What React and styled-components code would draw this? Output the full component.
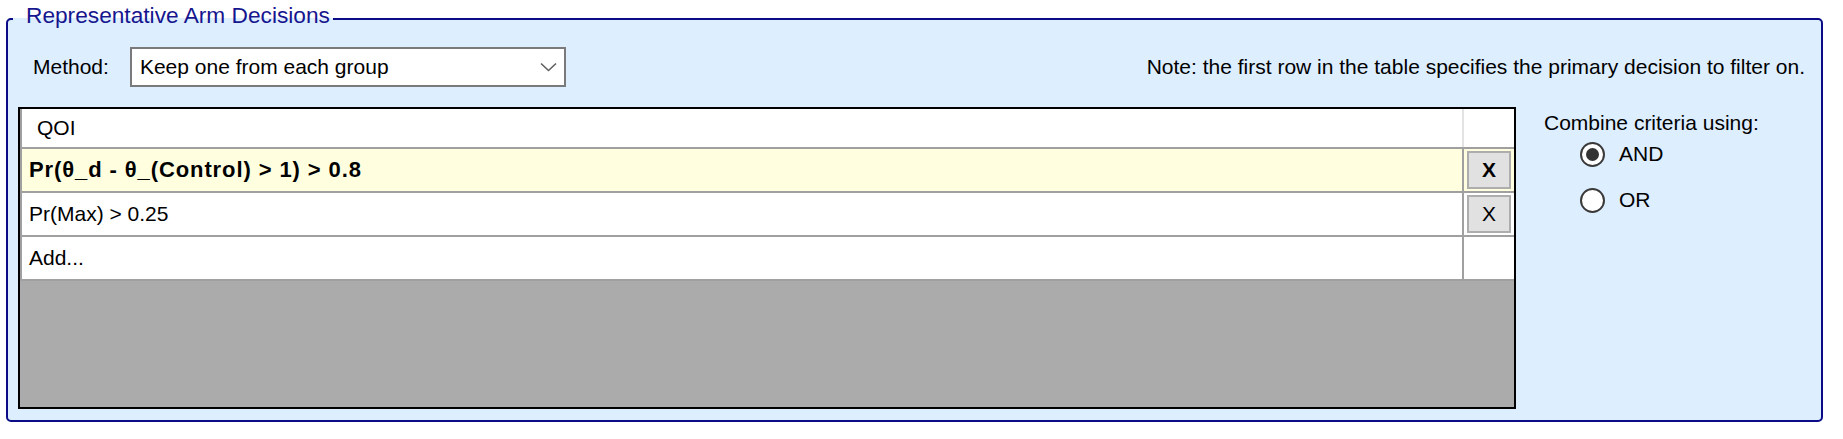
import React from "react";
import styled, { createGlobalStyle } from "styled-components";

const GlobalStyle = createGlobalStyle`
  html, body {
    margin: 0;
    padding: 0;
    background: #ffffff;
  }
  body {
    font-family: "Liberation Sans", Arial, sans-serif;
    font-size: 21px;
    color: #000000;
  }
`;

const Page = styled.div`
  width: 1843px;
  height: 439px;
  box-sizing: border-box;
  padding: 3px 20px 0 6px;
`;

const Group = styled.fieldset`
  margin: 0;
  min-width: 0;
  padding: 12px 14px 11px 10px;
  border: 2px solid #0b0b85;
  border-radius: 5px;
  background: #ddeeff;
`;

const Legend = styled.legend`
  margin-left: -5px;
  padding: 0 3px 7px 13px;
  line-height: 25px;
  font-size: 22.7px;
  color: #16168f;
`;

const TopRow = styled.div`
  display: flex;
  align-items: center;
  height: 40px;
  margin-bottom: 20px;
`;

const Label = styled.span`
  margin-left: 15px;
  margin-right: 21px;
  line-height: 24px;
`;

const Combo = styled.div`
  width: 436px;
  height: 40px;
  box-sizing: border-box;
  border: 2px solid #7a7a7a;
  background: #ffffff;
  display: flex;
  align-items: center;
  padding: 0 7px 0 8px;
`;

const ComboText = styled.span`
  flex: 1;
  line-height: 24px;
`;

const Note = styled.span`
  margin-left: auto;
  margin-right: 2px;
  line-height: 24px;
`;

const Body = styled.div`
  display: flex;
  gap: 28px;
`;

const Grid = styled.div`
  width: 1498px;
  height: 302px;
  box-sizing: border-box;
  border: 2px solid #000000;
  background: #ababab;
  display: flex;
  flex-direction: column;
`;

const HeaderRow = styled.div`
  display: flex;
  height: 40px;
  box-sizing: border-box;
  background: #ffffff;
  border-left: 2px solid #a0a0a0;
  border-bottom: 2px solid #a0a0a0;
`;

const HeadCell = styled.div`
  flex: 1;
  display: flex;
  align-items: center;
  padding-left: 15px;
`;

const HeadEnd = styled.div`
  width: 52px;
  box-sizing: border-box;
  border-left: 2px solid #e3e3e3;
`;

const Row = styled.div`
  display: flex;
  height: 44px;
  box-sizing: border-box;
  background: ${(p) => (p.$primary ? "#ffffe0" : "#ffffff")};
  border-left: 2px solid #a0a0a0;
  border-bottom: 2px solid #a0a0a0;
`;

const Cell = styled.div`
  flex: 1;
  display: flex;
  align-items: center;
  padding-left: 7px;
  font-size: ${(p) => (p.$bold ? "22px" : "21px")};
  font-weight: ${(p) => (p.$bold ? "bold" : "normal")};
  letter-spacing: ${(p) => (p.$bold ? "0.9px" : "0")};
  white-space: pre;
`;

const EndCell = styled.div`
  width: 52px;
  box-sizing: border-box;
  border-left: 2px solid #a0a0a0;
  display: flex;
  align-items: center;
  justify-content: center;
`;

const RemoveButton = styled.button`
  width: 44px;
  height: 38px;
  box-sizing: border-box;
  margin: 0;
  padding: 0;
  border: 2px solid #adadad;
  background: #e1e1e1;
  font-family: "Liberation Sans", Arial, sans-serif;
  font-size: 21px;
  font-weight: ${(p) => (p.$bold ? "bold" : "normal")};
  color: #000000;
`;

const Side = styled.div`
  display: flex;
  flex-direction: column;
  padding-top: 4px;
`;

const SideLabel = styled.span`
  line-height: 24px;
`;

const RadioList = styled.div`
  display: flex;
  flex-direction: column;
  gap: 16px;
  margin-top: 4px;
  margin-left: 36px;
`;

const RadioRow = styled.label`
  display: flex;
  align-items: center;
  gap: 14px;
  height: 30px;
`;

const RadioCircle = styled.span`
  width: 25px;
  height: 25px;
  box-sizing: border-box;
  border-radius: 50%;
  border: 2px solid #3a3a3a;
  background: #ffffff;
  display: flex;
  align-items: center;
  justify-content: center;
`;

const RadioDot = styled.span`
  width: 13px;
  height: 13px;
  border-radius: 50%;
  background: #333333;
`;

const Chevron = () => (
  <svg width="17" height="10" viewBox="0 0 17 10">
    <polyline
      points="1,1.5 8.5,8.5 16,1.5"
      fill="none"
      stroke="#606060"
      strokeWidth="1.6"
    />
  </svg>
);

const rows = [
  { text: "Pr(θ_d - θ_(Control) > 1) > 0.8", primary: true },
  { text: "Pr(Max) > 0.25" },
];

export default function App() {
  return (
    <>
      <GlobalStyle />
      <Page>
        <Group>
          <Legend>Representative Arm Decisions</Legend>
          <TopRow>
            <Label>Method:</Label>
            <Combo>
              <ComboText>Keep one from each group</ComboText>
              <Chevron />
            </Combo>
            <Note>
              Note: the first row in the table specifies the primary decision to
              filter on.
            </Note>
          </TopRow>
          <Body>
            <Grid>
              <HeaderRow>
                <HeadCell>QOI</HeadCell>
                <HeadEnd />
              </HeaderRow>
              {rows.map((r) => (
                <Row key={r.text} $primary={r.primary}>
                  <Cell $bold={r.primary}>{r.text}</Cell>
                  <EndCell>
                    <RemoveButton $bold={r.primary}>X</RemoveButton>
                  </EndCell>
                </Row>
              ))}
              <Row>
                <Cell>Add...</Cell>
                <EndCell />
              </Row>
            </Grid>
            <Side>
              <SideLabel>Combine criteria using:</SideLabel>
              <RadioList>
                <RadioRow>
                  <RadioCircle>
                    <RadioDot />
                  </RadioCircle>
                  AND
                </RadioRow>
                <RadioRow>
                  <RadioCircle />
                  OR
                </RadioRow>
              </RadioList>
            </Side>
          </Body>
        </Group>
      </Page>
    </>
  );
}
